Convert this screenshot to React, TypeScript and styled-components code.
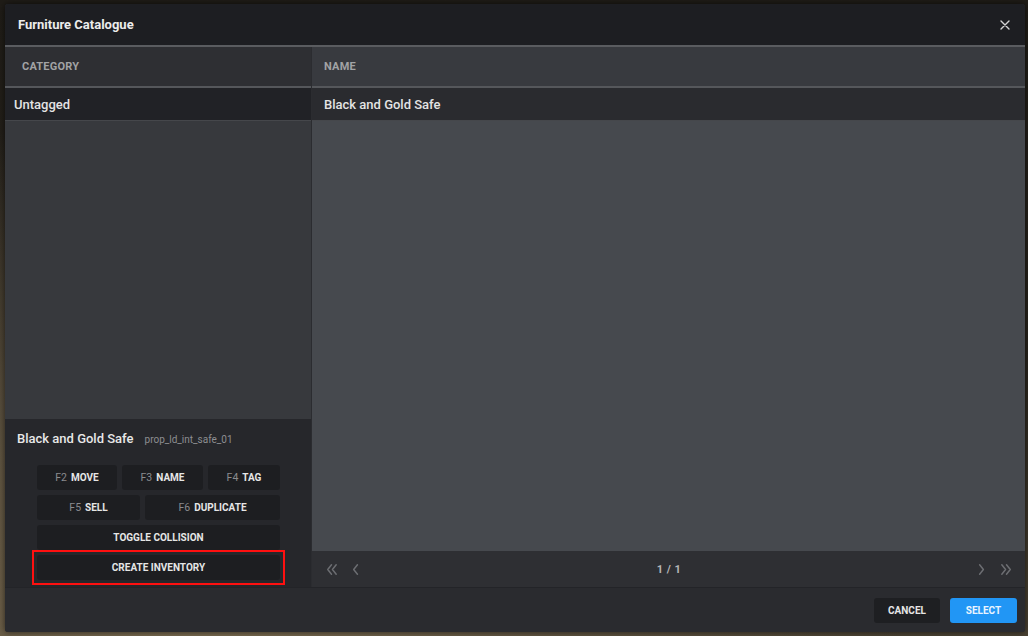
import React from 'react';
import styled, { createGlobalStyle } from 'styled-components';

const GlobalStyle = createGlobalStyle`
  html, body {
    margin: 0;
    padding: 0;
  }
  body {
    font-family: Roboto, 'Liberation Sans', Arial, sans-serif;
    -webkit-font-smoothing: antialiased;
  }
`;

const Scene = styled.div`
  width: 1028px;
  height: 636px;
  box-sizing: border-box;
  padding: 4px 3px 4px 5px;
  background:
    radial-gradient(ellipse at 20% 110%, #7d6e52 0%, #5e5340 30%, transparent 60%),
    linear-gradient(180deg, #1f1c17 0%, #27231c 55%, #4a4233 100%);
`;

const Modal = styled.div`
  width: 1020px;
  height: 628px;
  display: flex;
  flex-direction: column;
  background: #2a2b2f;
  border-radius: 3px;
  overflow: hidden;
  box-shadow: 0 0 6px rgba(0, 0, 0, 0.6);
`;

const Header = styled.div`
  height: 41px;
  flex: none;
  display: flex;
  align-items: center;
  justify-content: space-between;
  padding: 0 15px 0 13px;
  background: #1d1e22;
  border-bottom: 2px solid #5a5c60;
`;

const Title = styled.div`
  color: #ececec;
  font-size: 13px;
  font-weight: 700;
`;

const Close = styled.div`
  color: #d4d4d4;
  display: flex;
  cursor: pointer;
`;

const Body = styled.div`
  flex: 1;
  display: grid;
  grid-template-columns: 307px 1fr;
  min-height: 0;
`;

const Column = styled.div<{ $side: 'left' | 'right' }>`
  display: flex;
  flex-direction: column;
  min-height: 0;
  border-right: ${p => (p.$side === 'left' ? '1px solid #2b2c30' : 'none')};
`;

const HeadCell = styled.div<{ $side: 'left' | 'right' }>`
  height: 39px;
  flex: none;
  display: flex;
  align-items: center;
  padding-left: ${p => (p.$side === 'left' ? '17px' : '12px')};
  background: ${p => (p.$side === 'left' ? '#2e2f33' : '#383a3f')};
  border-bottom: 2px solid #55575b;
  color: #a2a3a5;
  font-size: 11px;
  font-weight: 700;
  letter-spacing: 0.2px;
`;

const Row = styled.div<{ $side: 'left' | 'right' }>`
  height: 32px;
  flex: none;
  display: flex;
  align-items: center;
  padding-left: ${p => (p.$side === 'left' ? '9px' : '12px')};
  background: ${p => (p.$side === 'left' ? '#212226' : '#2a2b2f')};
  border-bottom: 1px solid #45474b;
  color: #e4e4e4;
  font-size: 13px;
  font-weight: 500;
`;

const ListArea = styled.div<{ $side: 'left' | 'right' }>`
  flex: 1;
  background: ${p => (p.$side === 'left' ? '#37393d' : '#46494e')};
`;

const Detail = styled.div`
  height: 168px;
  flex: none;
  box-sizing: border-box;
  background: #26272b;
  padding: 12px 0 0 12px;
  display: flex;
  flex-direction: column;
`;

const DetailTitle = styled.div`
  display: flex;
  align-items: baseline;
  gap: 11px;
  margin-bottom: 19px;
`;

const ItemName = styled.span`
  color: #e8e8e8;
  font-size: 13px;
  font-weight: 500;
`;

const ItemModel = styled.span`
  color: #8d8e91;
  font-size: 10px;
`;

const Buttons = styled.div`
  width: 243px;
  margin-left: 20px;
  display: flex;
  flex-direction: column;
  gap: 5px;
`;

const ButtonRow = styled.div<{ $cols: string }>`
  display: grid;
  grid-template-columns: ${p => p.$cols};
  gap: 5px;
`;

const HighlightFrame = styled.div`
  outline: 2px solid #ff1010;
  outline-offset: 3px;
  display: grid;
`;

const ActionButton = styled.button`
  height: 25px;
  border: none;
  border-radius: 3px;
  background: #1d1e21;
  color: #e6e6e6;
  font-family: inherit;
  font-size: 10px;
  font-weight: 700;
  padding: 0;
  display: flex;
  align-items: center;
  justify-content: center;
  gap: 4px;
`;

const Key = styled.span`
  color: #8a8b8e;
  font-weight: 400;
  font-size: 10.5px;
`;

const Pager = styled.div`
  height: 36px;
  flex: none;
  display: flex;
  align-items: center;
  padding: 0 11px 0 12px;
  background: #2e2f33;
  color: #6c6e72;
`;

const PagerGroup = styled.div`
  display: flex;
  align-items: center;
  gap: 10px;
`;

const PageText = styled.div`
  flex: 1;
  text-align: center;
  color: #b4b5b7;
  font-size: 11px;
  font-weight: 700;
  letter-spacing: 0.5px;
`;

const Footer = styled.div`
  height: 44px;
  flex: none;
  display: flex;
  align-items: center;
  justify-content: flex-end;
  gap: 10px;
  padding-right: 8px;
  background: #2a2b2f;
  border-top: 1px solid #232428;
`;

const FooterButton = styled.button<{ $primary?: boolean }>`
  height: 25px;
  width: ${p => (p.$primary ? '67px' : '66px')};
  border: none;
  border-radius: 3px;
  background: ${p => (p.$primary ? '#2196f5' : '#1e1f22')};
  color: ${p => (p.$primary ? '#e9f4ff' : '#e6e6e6')};
  font-family: inherit;
  font-size: 10px;
  font-weight: 700;
  padding: 0;
`;

const Chevron: React.FC<{ dir: 'left' | 'right'; double?: boolean }> = ({ dir, double }) => {
  const single = dir === 'left' ? 'M9 3 L5 8 L9 13' : 'M6 3 L10 8 L6 13';
  const dbl =
    dir === 'left'
      ? 'M8 3 L4 8 L8 13 M13 3 L9 8 L13 13'
      : 'M3 3 L7 8 L3 13 M8 3 L12 8 L8 13';
  return (
    <svg width="15" height="15" viewBox="0 0 16 16" fill="none">
      <path d={double ? dbl : single} stroke="currentColor" strokeWidth="1.6" strokeLinecap="round" strokeLinejoin="round" />
    </svg>
  );
};

const App: React.FC = () => {
  return (
    <Scene>
      <GlobalStyle />
      <Modal>
        <Header>
          <Title>Furniture Catalogue</Title>
          <Close>
            <svg width="10" height="10" viewBox="0 0 10 10">
              <path d="M1 1 L9 9 M9 1 L1 9" stroke="currentColor" strokeWidth="1.4" strokeLinecap="round" />
            </svg>
          </Close>
        </Header>
        <Body>
          <Column $side="left">
            <HeadCell $side="left">CATEGORY</HeadCell>
            <Row $side="left">Untagged</Row>
            <ListArea $side="left" />
            <Detail>
              <DetailTitle>
                <ItemName>Black and Gold Safe</ItemName>
                <ItemModel>prop_ld_int_safe_01</ItemModel>
              </DetailTitle>
              <Buttons>
                <ButtonRow $cols="80px 81px 72px">
                  <ActionButton><Key>F2</Key>MOVE</ActionButton>
                  <ActionButton><Key>F3</Key>NAME</ActionButton>
                  <ActionButton><Key>F4</Key>TAG</ActionButton>
                </ButtonRow>
                <ButtonRow $cols="103px 135px">
                  <ActionButton><Key>F5</Key>SELL</ActionButton>
                  <ActionButton><Key>F6</Key>DUPLICATE</ActionButton>
                </ButtonRow>
                <ButtonRow $cols="1fr">
                  <ActionButton>TOGGLE COLLISION</ActionButton>
                </ButtonRow>
                <HighlightFrame>
                  <ActionButton>CREATE INVENTORY</ActionButton>
                </HighlightFrame>
              </Buttons>
            </Detail>
          </Column>
          <Column $side="right">
            <HeadCell $side="right">NAME</HeadCell>
            <Row $side="right">Black and Gold Safe</Row>
            <ListArea $side="right" />
            <Pager>
              <PagerGroup>
                <Chevron dir="left" double />
                <Chevron dir="left" />
              </PagerGroup>
              <PageText>1 / 1</PageText>
              <PagerGroup>
                <Chevron dir="right" />
                <Chevron dir="right" double />
              </PagerGroup>
            </Pager>
          </Column>
        </Body>
        <Footer>
          <FooterButton>CANCEL</FooterButton>
          <FooterButton $primary>SELECT</FooterButton>
        </Footer>
      </Modal>
    </Scene>
  );
};

export default App;
